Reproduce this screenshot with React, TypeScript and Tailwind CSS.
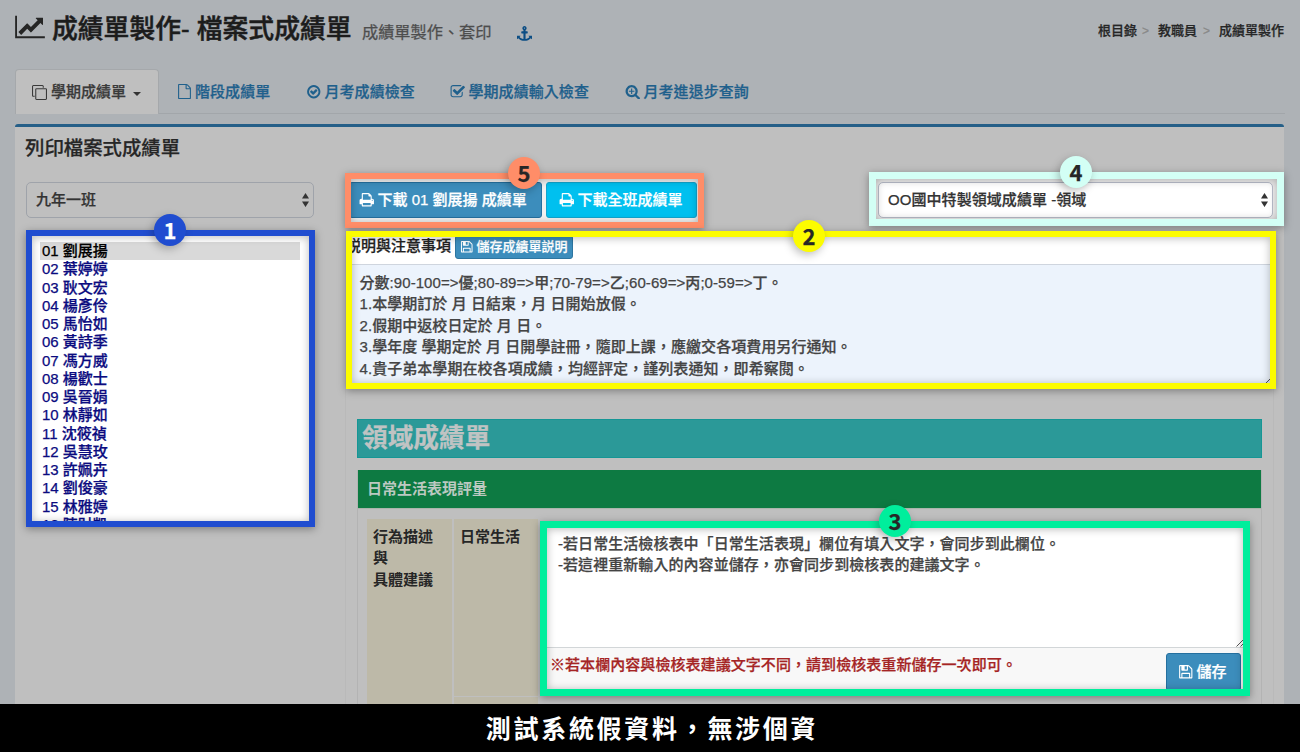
import type { ReactNode } from "react";

const icons = {
  chart:
    "M2048 1536v128h-2048v-1536h128v1408h1920zm-128-1248v435q0 21-19.5 29.5t-35.5-7.5l-121-121-633 633q-10 10-23 10t-23-10l-233-233-416 416-192-192 585-585q10-10 23-10t23 10l233 233 464-464-121-121q-16-16-7.5-35.5t29.5-19.5h435q14 0 23 9t9 23z",
  anchor:
    "M960 256q0-26-19-45t-45-19-45 19-19 45 19 45 45 19 45-19 19-45zm832 928v352q0 22-20 30-8 2-12 2-12 0-23-9l-93-93q-119 143-318.5 226.5t-429.5 83.5-429.5-83.5-318.5-226.5l-93 93q-9 9-23 9-4 0-12-2-20-8-20-30v-352q0-14 9-23t23-9h352q22 0 30 20 8 19-7 35l-100 100q67 91 189.5 153.5t271.5 82.5v-647h-192q-26 0-45-19t-19-45v-128q0-26 19-45t45-19h192v-163q-58-34-93-92.5t-35-128.5q0-106 75-181t181-75 181 75 75 181q0 70-35 128.5t-93 92.5v163h192q26 0 45 19t19 45v128q0 26-19 45t-45 19h-192v647q149-20 271.5-82.5t189.5-153.5l-100-100q-15-16-7-35 8-20 30-20h352q14 0 23 9t9 23z",
  clone:
    "M1664 1632v-1088q0-13-9.5-22.5t-22.5-9.5h-1088q-13 0-22.5 9.5t-9.5 22.5v1088q0 13 9.5 22.5t22.5 9.5h1088q13 0 22.5-9.5t9.5-22.5zm128-1088v1088q0 66-47 113t-113 47h-1088q-66 0-113-47t-47-113v-1088q0-66 47-113t113-47h1088q66 0 113 47t47 113zm-384-384v160h-128v-160q0-13-9.5-22.5t-22.5-9.5h-1088q-13 0-22.5 9.5t-9.5 22.5v1088q0 13 9.5 22.5t22.5 9.5h160v128h-160q-66 0-113-47t-47-113v-1088q0-66 47-113t113-47h1088q66 0 113 47t47 113z",
  file: "M1596 380q28 28 48 76t20 88v1152q0 40-28 68t-68 28h-1344q-40 0-68-28t-28-68v-1600q0-40 28-68t68-28h896q40 0 88 20t76 48zm-444-244v376h376q-10-29-22-41l-313-313q-12-12-41-22zm384 1528v-1024h-416q-40 0-68-28t-28-68v-416h-768v1536h1280z",
  checkCircle:
    "M1299 813l-422 422q-19 19-45 19t-45-19l-294-294q-19-19-19-45t19-45l102-102q19-19 45-19t45 19l147 147 275-275q19-19 45-19t45 19l102 102q19 19 19 45t-19 45zm141 83q0-148-73-273t-198-198-273-73-273 73-198 198-73 273 73 273 198 198 273 73 273-73 198-198 73-273zm224 0q0 209-103 385.5t-279.5 279.5-385.5 103-385.5-103-279.5-279.5-103-385.5 103-385.5 279.5-279.5 385.5-103 385.5 103 279.5 279.5 103 385.5z",
  checkSquare:
    "M1472 930v318q0 119-84.5 203.5t-203.5 84.5h-832q-119 0-203.5-84.5t-84.5-203.5v-832q0-119 84.5-203.5t203.5-84.5h832q63 0 117 25 15 7 18 23 3 17-9 29l-49 49q-10 10-23 10-3 0-9-2-23-6-45-6h-832q-66 0-113 47t-47 113v832q0 66 47 113t113 47h832q66 0 113-47t47-113v-254q0-13 9-22l64-64q10-10 23-10 6 0 12 3 20 8 20 29zm231-489l-814 814q-24 24-57 24t-57-24l-430-430q-24-24-24-57t24-57l110-110q24-24 57-24t57 24l263 263 647-647q24-24 57-24t57 24l110 110q24 24 24 57t-24 57z",
  searchPlus:
    "M1088 800v64q0 13-9.5 22.5t-22.5 9.5h-224v224q0 13-9.5 22.5t-22.5 9.5h-64q-13 0-22.5-9.5t-9.5-22.5v-224h-224q-13 0-22.5-9.5t-9.5-22.5v-64q0-13 9.5-22.5t22.5-9.5h224v-224q0-13 9.5-22.5t22.5-9.5h64q13 0 22.5 9.5t9.5 22.5v224h224q13 0 22.5 9.5t9.5 22.5zm128 32q0-185-131.5-316.5t-316.5-131.5-316.5 131.5-131.5 316.5 131.5 316.5 316.5 131.5 316.5-131.5 131.5-316.5zm512 832q0 53-37.5 90.5t-90.5 37.5q-54 0-90-38l-343-342q-179 124-399 124-143 0-273.5-55.5t-225-150-150-225-55.5-273.5 55.5-273.5 150-225 225-150 273.5-55.5 273.5 55.5 225 150 150 225 55.5 273.5q0 220-124 399l343 343q37 37 37 90z",
  print:
    "M448 1536h896v-256h-896v256zm0-640h896v-384h-160q-40 0-68-28t-28-68v-160h-640v640zm1152 64q0-26-19-45t-45-19-45 19-19 45 19 45 45 19 45-19 19-45zm128 0v416q0 13-9.5 22.5t-22.5 9.5h-224v160q0 40-28 68t-68 28h-960q-40 0-68-28t-28-68v-160h-224q-13 0-22.5-9.5t-9.5-22.5v-416q0-79 56.5-135.5t135.5-56.5h64v-544q0-40 28-68t68-28h672q40 0 88 20t76 48l152 152q28 28 48 76t20 88v256h64q79 0 135.5 56.5t56.5 135.5z",
  floppy:
    "M512 1536h768v-384h-768v384zm896 0h128v-896q0-14-10-38.5t-20-34.5l-281-281q-10-10-34-20t-39-10v416q0 40-28 68t-68 28h-576q-40 0-68-28t-28-68v-416h-128v1280h128v-416q0-40 28-68t68-28h832q40 0 68 28t28 68v416zm-384-928v-320q0-13-9.5-22.5t-22.5-9.5h-192q-13 0-22.5 9.5t-9.5 22.5v320q0 13 9.5 22.5t22.5 9.5h192q13 0 22.5-9.5t9.5-22.5zm640 32v928q0 40-28 68t-68 28h-1344q-40 0-68-28t-28-68v-1344q0-40 28-68t68-28h928q40 0 88 20t76 48l280 280q28 28 48 76t20 88z",
};

function Icon({ name, className }: { name: keyof typeof icons; className: string }) {
  return (
    <svg
      viewBox={name === "chart" ? "0 0 2048 1792" : "0 0 1792 1792"}
      fill="currentColor"
      className={`shrink-0 ${className}`}
    >
      <path d={icons[name]} />
    </svg>
  );
}

function Arrows() {
  return (
    <svg viewBox="0 0 7 14" className="h-[14px] w-[7px] shrink-0" fill="#333">
      <path d="M3.5 0L7 5.5H0zM3.5 14L7 8.5H0z" />
    </svg>
  );
}

function Grip({ className }: { className: string }) {
  return (
    <svg viewBox="0 0 8 8" className={`absolute h-2 w-2 ${className}`} stroke="#555" fill="none">
      <path d="M0.5 7.5L7.5 0.5M4.5 7.5L7.5 4.5" />
    </svg>
  );
}

/* Highlight frame: coloured border over its content, with a numbered badge on the top edge */
function Callout({
  n,
  frame,
  badge,
  className,
  children,
}: {
  n: number;
  frame: string;
  badge: string;
  className: string;
  children: ReactNode;
}) {
  return (
    <section className={`relative ${className}`}>
      <div className="h-full overflow-hidden">{children}</div>
      <div
        className={`pointer-events-none absolute inset-0 shadow-[0_2px_8px_rgba(0,0,0,0.35),inset_0_1px_8px_rgba(0,0,0,0.28)] ${frame}`}
      />
      <div
        className={`absolute z-10 flex h-8 w-8 items-center justify-center rounded-full pb-[3px] font-['Noto_Sans_CJK_TC',sans-serif] text-[22px] leading-8 font-bold shadow-[-2px_3px_8px_rgba(0,0,0,0.25)] ${badge}`}
      >
        {n}
      </div>
    </section>
  );
}

const students = [
  "01 劉展揚", "02 葉婷婷", "03 耿文宏", "04 楊彥伶", "05 馬怡如", "06 黃詩季", "07 馮方威", "08 楊歡士",
  "09 吳晉娟", "10 林靜如", "11 沈筱禎", "12 吳慧玫", "13 許姵卉", "14 劉俊豪", "15 林雅婷", "16 陳財凱",
];

const tabs: { icon: keyof typeof icons; label: string; width: string }[] = [
  { icon: "file", label: "階段成績單", width: "w-[129px]" },
  { icon: "checkCircle", label: "月考成績檢查", width: "w-[144px]" },
  { icon: "checkSquare", label: "學期成績輸入檢查", width: "w-[175px]" },
  { icon: "searchPlus", label: "月考進退步查詢", width: "w-[160px]" },
];

export default function App() {
  return (
    <div className="flex h-[752px] w-[1300px] flex-col overflow-hidden bg-[#aeb2b6] font-['Liberation_Sans','Noto_Sans_CJK_TC',sans-serif] text-[15px] leading-[21.43px] font-medium text-[#262626] [-webkit-text-stroke:0.25px]">
      <div className="flex h-[704px] shrink-0 flex-col overflow-hidden px-[15px]">
        <header className="flex h-[69px] shrink-0 items-start justify-between">
          <div className="flex items-start">
            <Icon name="chart" className="mt-[14px] h-[26px] w-[30px]" />
            <h1 className="ml-[7px] w-[298px] pt-[9px] text-[25.8px] leading-[40px] whitespace-nowrap text-[#1c1c1c] [-webkit-text-stroke:0.5px]">
              成績單製作- 檔案式成績單
            </h1>
            <small className="ml-[12px] pt-[21px] text-[16.2px] leading-[22px] whitespace-nowrap font-normal text-[#4d4d4d]">
              成績單製作、套印
            </small>
            <Icon name="anchor" className="mt-[26px] ml-[25px] h-[15px] w-[15px] text-[#0b4d84]" />
          </div>
          <nav className="flex pt-[20px] pr-px text-[13px] leading-[22px] whitespace-nowrap">
            <span>根目錄</span>
            <span className="mr-[9px] ml-[5px] text-[12px] text-[#888]">&gt;</span>
            <span>教職員</span>
            <span className="mr-[9px] ml-[6px] text-[12px] text-[#888]">&gt;</span>
            <span>成績單製作</span>
          </nav>
        </header>

        <nav className="flex h-[45px] shrink-0 border-b border-[#a2a6aa]">
          <div className="-mb-px flex w-[144px] shrink-0 items-center rounded-t border border-b-0 border-[#a5a8ab] bg-[#bfbfbf] pl-[16px] text-[#3a3a3a]">
            <Icon name="clone" className="h-[15px] w-[15px]" />
            <span className="ml-[4px]">學期成績單</span>
            <svg viewBox="0 0 8 4" className="mt-[3px] ml-[7px] h-1 w-2" fill="#333">
              <path d="M0 0H8L4 4z" />
            </svg>
          </div>
          <div className="flex pt-px pl-[18px]">
            {tabs.map((t) => (
              <div key={t.label} className={`flex items-center whitespace-nowrap text-[#1f608c] ${t.width}`}>
                <Icon
                  name={t.icon}
                  className={t.icon === "file" ? "mr-[3px] h-[15px] w-[15px]" : "mr-[3px] h-[15.5px] w-[15.5px]"}
                />
                <span className="tracking-[0.06px]">{t.label}</span>
              </div>
            ))}
          </div>
        </nav>

        <main className="mt-[10px] flex w-[1269px] grow flex-col rounded-t-[3px] border-t-[3px] border-[#255f88] bg-[#bfbfbf]">
          <h2 className="h-[44px] shrink-0 pt-[8px] pl-[10px] text-[19.4px] leading-[26px]">列印檔案式成績單</h2>
          <div className="flex">
            <aside className="ml-[11px] w-[289px] shrink-0 pt-[11px]">
              <div className="flex h-[36px] w-[288px] items-center justify-between rounded-[5px] border border-[#9fa3aa] pr-[4px] pl-[9px] text-[#333]">
                <span>九年一班</span>
                <Arrows />
              </div>
              <Callout
                n={1}
                className="mt-[12px] h-[297px] bg-white"
                frame="border-[6px] border-[#204dd0]"
                badge="-top-4 left-[128px] bg-[#204dd0] text-white"
              >
                <ul className="pt-[12px] pl-[14px] text-[#0b0b80]">
                  {students.map((s, i) => (
                    <li
                      key={s}
                      className={
                        i === 0
                          ? "h-[18.25px] w-[260px] bg-[#d9d9d9] pl-[2px] leading-[18px] text-black"
                          : "h-[18.25px] pl-[2px] leading-[18px]"
                      }
                    >
                      {s}
                    </li>
                  ))}
                </ul>
              </Callout>
            </aside>

            <div className="ml-[30px] w-[939px] shrink-0">
              <div className="flex items-start justify-between">
                <Callout
                  n={5}
                  className="mt-[2px] h-[55px] w-[359px] bg-[#f1f1f1]"
                  frame="border-[6px] border-[#ff8d68]"
                  badge="-top-4 left-[163px] bg-[#ff8d68] text-[#262626]"
                >
                  <div className="flex gap-[4px] pt-[9px] pl-[4px] whitespace-nowrap text-white">
                    <button className="flex h-[36px] w-[193px] items-center rounded-[3px] border border-[#25709f] bg-[#3c8dbc] pl-[9px] text-left">
                      <Icon name="print" className="mr-[3px] h-[15.5px] w-[15.5px]" />
                      下載 01 劉展揚 成績單
                    </button>
                    <button className="flex h-[36px] w-[151px] items-center rounded-[3px] border border-[#12a5ce] bg-[#00c0ef] pl-[12px]">
                      <Icon name="print" className="mr-[3px] h-[15.5px] w-[15.5px]" />
                      下載全班成績單
                    </button>
                  </div>
                </Callout>
                <Callout
                  n={4}
                  className="mt-[1px] h-[54px] w-[415px] bg-[#eee]"
                  frame="border-[7px] border-[#d3fff5]"
                  badge="-top-4 left-[191px] bg-[#d3fff5] text-[#262626]"
                >
                  <div className="mt-[10px] ml-[9px] flex h-[36px] w-[395px] items-center justify-between rounded-[5px] border border-[#b9bdca] bg-white pr-[4px] pl-[9px] text-[#333]">
                    <span className="tracking-[0.06px]">OO國中特製領域成績單 -領域</span>
                    <Arrows />
                  </div>
                </Callout>
              </div>

              <div className="w-[929px] border-r border-l border-[#b9b9b9]">
                <Callout
                  n={2}
                  className="mt-[3px] h-[158px] w-[930px] bg-white"
                  frame="border-[6px] border-[#fcfc00]"
                  badge="-top-[11px] left-[447px] bg-[#fcfc00] text-[#262626]"
                >
                  <div className="flex h-[33px] items-start pt-[4px]">
                    <span className="whitespace-nowrap text-[#222]">説明與注意事項</span>
                    <button className="ml-[4px] flex h-[24px] w-[118px] items-center rounded-[3px] border border-[#2d75a0] bg-[#3c8dbc] pl-[4px] text-[13px] whitespace-nowrap text-white">
                      <Icon name="floppy" className="mr-[3px] h-[13.5px] w-[13.5px]" />
                      儲存成績單説明
                    </button>
                  </div>
                  <div className="h-[120px] border-t border-[#cfd5de] bg-[#ecf3fc] pt-[7px] pl-[13.5px] tracking-[0.06px] whitespace-pre text-[#444]">
                    {"分數:90-100=>優;80-89=>甲;70-79=>乙;60-69=>丙;0-59=>丁。\n1.本學期訂於 月 日結束，月 日開始放假。\n2.假期中返校日定於 月 日。\n3.學年度 學期定於 月 日開學註冊，隨即上課，應繳交各項費用另行通知。\n4.貴子弟本學期在校各項成績，均經評定，謹列表通知，即希察閱。"}
                  </div>
                  <Grip className="right-[4px] bottom-[4px]" />
                </Callout>

                <div className="mt-[30px] ml-[11px] h-[39px] w-[905px] border border-[#159695] bg-[#2b9998] pl-[4px] text-[25.7px] leading-[36px] font-bold text-[#c0c3c3]">
                  領域成績單
                </div>

                <div className="mt-[12px] ml-[11px] h-[260px] w-[905px] border-r border-l border-[#b3b3b3]">
                  <div className="h-[38px] w-[903px] bg-[#0d7a42] pl-[9px] leading-[38px] font-bold text-[#bcc9c1] [-webkit-text-stroke:0]">
                    日常生活表現評量
                  </div>
                  <div className="flex gap-[2px] border-t border-[#abb5ac] pt-[10px] pl-[9px] leading-[21.43px] font-bold text-[#262626] [-webkit-text-stroke:0]">
                    <div className="h-[220px] w-[85px] bg-[#bdb9a8] pt-[7px] pl-[6px] whitespace-pre">
                      {"行為描述\n與\n具體建議"}
                    </div>
                    <div className="flex w-[84px] flex-col gap-px">
                      <div className="h-[177px] bg-[#bdb9a8] pt-[7px] pl-[6px]">日常生活</div>
                      <div className="h-[40px] bg-[#bdb9a8]" />
                    </div>
                    <Callout
                      n={3}
                      className="mt-[2px] h-[175px] w-[710px] bg-[#f8f8f8] font-medium [-webkit-text-stroke:0.25px]"
                      frame="border-[7px] border-[#00ee9c]"
                      badge="-top-4 left-[339px] bg-[#00ee9c] text-[#262626]"
                    >
                      <div className="relative h-[127px] border-b border-[#d2d6d8] bg-white pt-[12px] pl-[18px] tracking-[0.06px] whitespace-pre text-[#444]">
                        {"-若日常生活檢核表中「日常生活表現」欄位有填入文字，會同步到此欄位。\n-若這裡重新輸入的內容並儲存，亦會同步到檢核表的建議文字。"}
                        <Grip className="right-[6px] bottom-0" />
                      </div>
                      <div className="flex justify-between pr-[9px] pl-[10px]">
                        <p className="pt-[6px] tracking-[0.06px] whitespace-nowrap text-[#a52424]">
                          ※若本欄內容與檢核表建議文字不同，請到檢核表重新儲存一次即可。
                        </p>
                        <button className="mt-[5px] flex h-[38px] w-[75px] items-center rounded-[3px] border border-[#25709f] bg-[#3c8dbc] pl-[11px] whitespace-nowrap text-white">
                          <Icon name="floppy" className="mr-[3px] h-[15.5px] w-[15.5px]" />
                          儲存
                        </button>
                      </div>
                    </Callout>
                  </div>
                </div>
              </div>
            </div>
          </div>
        </main>
      </div>
      <footer className="flex h-[48px] shrink-0 items-center justify-center bg-black pb-[2px] pl-[4px] font-['Noto_Sans_CJK_TC',sans-serif] text-[25px] leading-[46px] font-bold tracking-[2.7px] text-white [-webkit-text-stroke:0]">
        測試系統假資料，無涉個資
      </footer>
    </div>
  );
}
